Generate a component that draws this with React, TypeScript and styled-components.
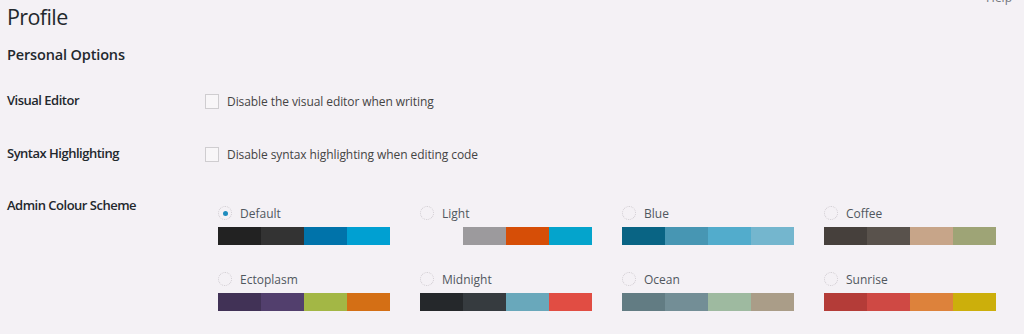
import React, { useState } from "react";
import styled, { createGlobalStyle } from "styled-components";

const GlobalStyle = createGlobalStyle`
  html, body {
    margin: 0;
    padding: 0;
    background: #f4f1f5;
  }
  body {
    font-family: "Open Sans", "Noto Sans", sans-serif;
    color: #444;
    font-size: 12px;
  }
`;

const Wrap = styled.div`
  position: relative;
  width: 1024px;
  height: 334px;
  overflow: hidden;
  padding: 0 0 0 7px;
  box-sizing: border-box;
`;

const HelpTab = styled.span`
  position: absolute;
  top: -11px;
  right: 12px;
  font-size: 12px;
  color: #72777c;
`;

const Title = styled.h1`
  margin: 0;
  padding-top: 2px;
  font-size: 21.5px;
  line-height: 29px;
  font-weight: 400;
  letter-spacing: -0.6px;
  color: #23282d;
`;

const SectionTitle = styled.h2`
  margin: 14px 0 0;
  font-size: 14.5px;
  line-height: 20px;
  font-weight: 600;
  letter-spacing: -0.15px;
  color: #23282d;
`;

const FormTable = styled.div`
  display: flex;
  flex-direction: column;
  margin-top: 26px;
`;

const Row = styled.div<{ $height?: number }>`
  display: grid;
  grid-template-columns: 196px 1fr;
  align-items: start;
  height: ${(p) => (p.$height ? `${p.$height}px` : "auto")};
`;

const RowLabel = styled.div`
  font-size: 13px;
  line-height: 18px;
  font-weight: 600;
  letter-spacing: -0.5px;
  color: #23282d;
`;

const CheckLabel = styled.label`
  display: flex;
  align-items: center;
  gap: 8px;
  padding-top: 3px;
  padding-left: 2px;
  color: #444;
  font-size: 12px;
  line-height: 15px;
  letter-spacing: -0.08px;
`;

const CheckBox = styled.span`
  width: 14px;
  height: 15px;
  border: 1px solid #cfcdd0;
  background: #f8f6f8;
  box-sizing: border-box;
  flex: none;
`;

const ColourGrid = styled.div`
  display: grid;
  grid-template-columns: repeat(4, 202px);
`;

const ColourOption = styled.div`
  padding: 7px 15px 17px;
  cursor: pointer;
`;

const OptionHead = styled.div`
  display: flex;
  align-items: center;
  gap: 8px;
  height: 20px;
  margin-bottom: 4px;
  font-size: 12px;
  color: #50575e;
`;

const Radio = styled.span<{ $checked: boolean }>`
  position: relative;
  width: 14px;
  height: 14px;
  border-radius: 50%;
  border: 1px dotted #cfcbd0;
  box-sizing: border-box;
  flex: none;
  &::after {
    content: "";
    display: ${(p) => (p.$checked ? "block" : "none")};
    position: absolute;
    left: 50%;
    top: 50%;
    width: 5px;
    height: 5px;
    margin: -2.5px 0 0 -2.5px;
    border-radius: 50%;
    background: #1e8cbe;
  }
`;

const Palette = styled.div`
  display: grid;
  grid-template-columns: repeat(4, 1fr);
  height: 18px;
`;

const Swatch = styled.div<{ $colour: string }>`
  background: ${(p) => p.$colour};
`;

const schemes = [
  { name: "Default", colours: ["#222222", "#333333", "#0073aa", "#00a0d2"] },
  { name: "Light", colours: ["transparent", "#9c9a9d", "#d64e07", "#04a4cc"] },
  { name: "Blue", colours: ["#096484", "#4796b3", "#52accc", "#74b6ce"] },
  { name: "Coffee", colours: ["#46403c", "#59524c", "#c7a589", "#9ea476"] },
  { name: "Ectoplasm", colours: ["#413256", "#523f6d", "#a3b745", "#d46f15"] },
  { name: "Midnight", colours: ["#25282b", "#363b3f", "#69a8bb", "#e14d43"] },
  { name: "Ocean", colours: ["#627c83", "#738e96", "#9ebaa0", "#aa9d88"] },
  { name: "Sunrise", colours: ["#b43c38", "#cf4944", "#dd823b", "#ccaf0b"] },
];

const App = () => {
  const [scheme, setScheme] = useState("Default");

  return (
    <Wrap>
      <GlobalStyle />
      <HelpTab>Help</HelpTab>
      <Title>Profile</Title>
      <SectionTitle>Personal Options</SectionTitle>
      <FormTable>
        <Row $height={53}>
          <RowLabel>Visual Editor</RowLabel>
          <CheckLabel>
            <CheckBox />
            Disable the visual editor when writing
          </CheckLabel>
        </Row>
        <Row $height={52}>
          <RowLabel>Syntax Highlighting</RowLabel>
          <CheckLabel>
            <CheckBox />
            Disable syntax highlighting when editing code
          </CheckLabel>
        </Row>
        <Row>
          <RowLabel>Admin Colour Scheme</RowLabel>
          <ColourGrid>
            {schemes.map((s) => (
              <ColourOption key={s.name} onClick={() => setScheme(s.name)}>
                <OptionHead>
                  <Radio $checked={scheme === s.name} />
                  {s.name}
                </OptionHead>
                <Palette>
                  {s.colours.map((c, i) => (
                    <Swatch key={i} $colour={c} />
                  ))}
                </Palette>
              </ColourOption>
            ))}
          </ColourGrid>
        </Row>
      </FormTable>
    </Wrap>
  );
};

export default App;
